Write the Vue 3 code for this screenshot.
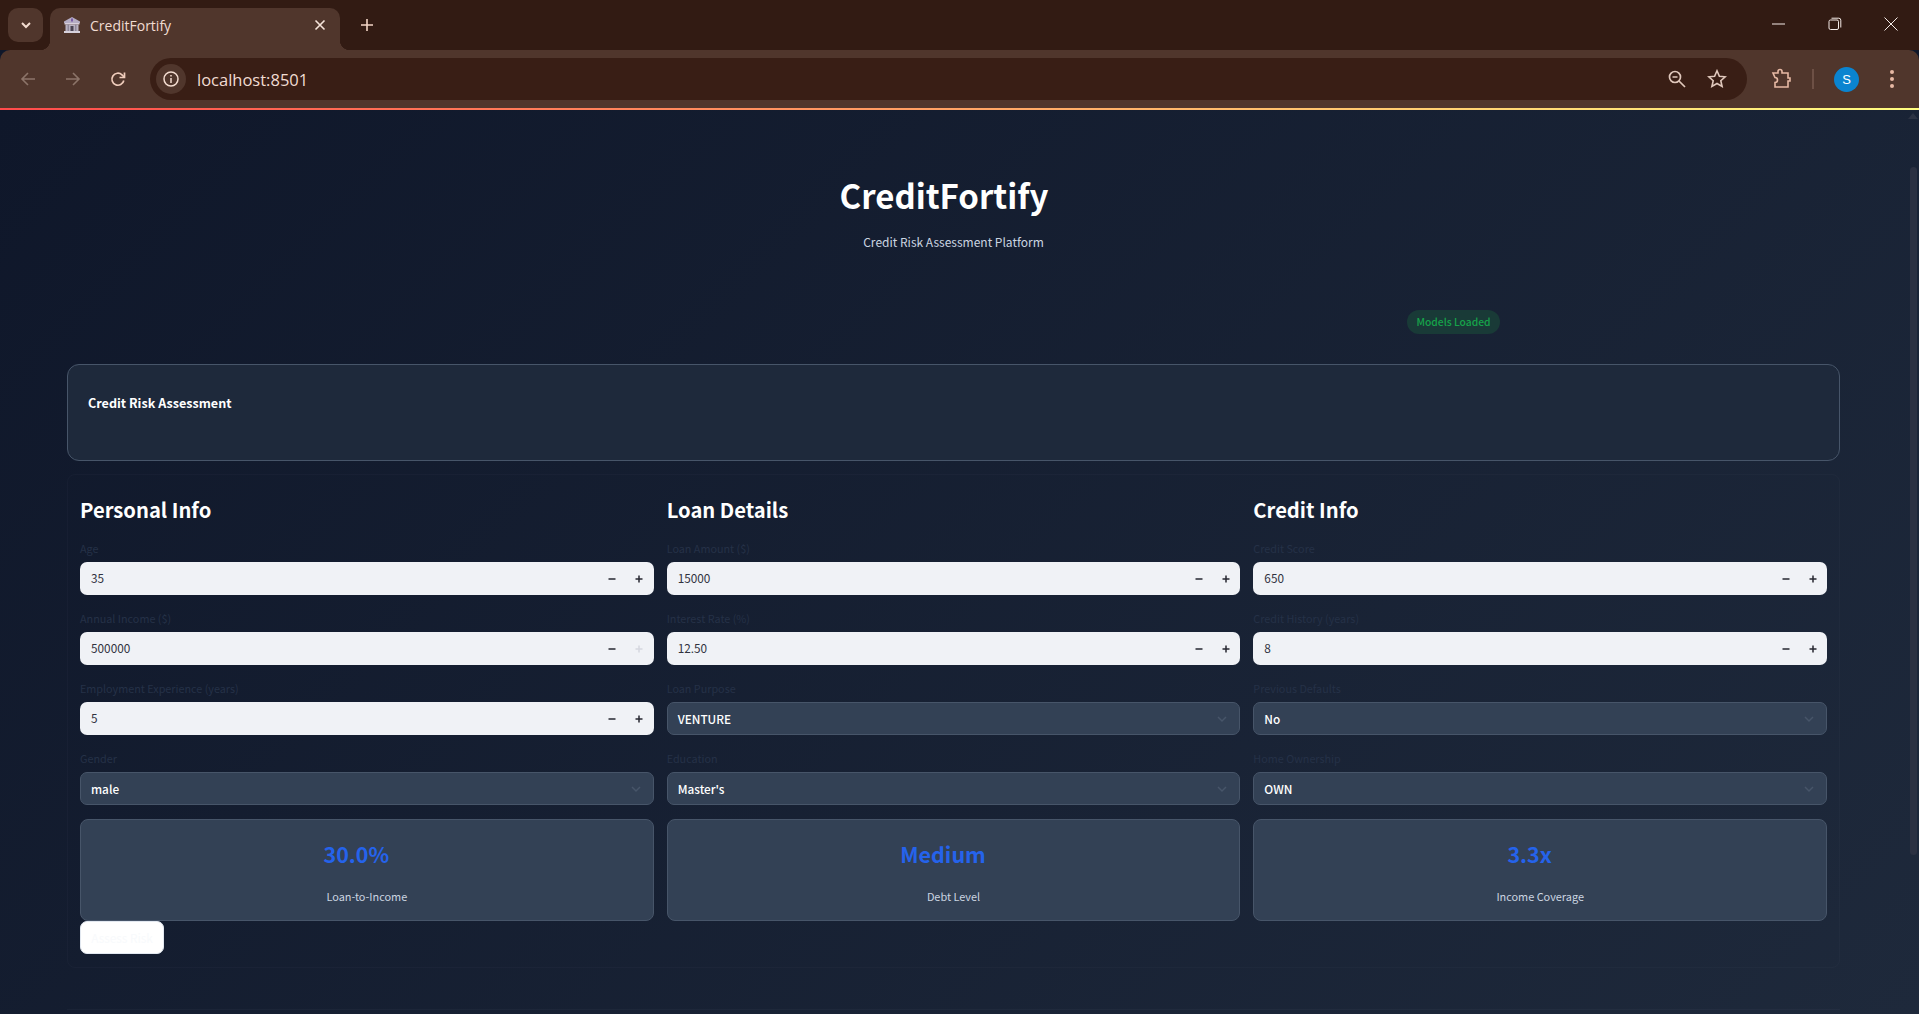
<script setup>
const columns = [
  {
    title: 'Personal Info',
    fields: [
      { label: 'Age', value: '35', type: 'number' },
      { label: 'Annual Income ($)', value: '500000', type: 'number', maxed: true },
      { label: 'Employment Experience (years)', value: '5', type: 'number' },
      { label: 'Gender', value: 'male', type: 'select' }
    ],
    metric: { value: '30.0%', label: 'Loan-to-Income' }
  },
  {
    title: 'Loan Details',
    fields: [
      { label: 'Loan Amount ($)', value: '15000', type: 'number' },
      { label: 'Interest Rate (%)', value: '12.50', type: 'number' },
      { label: 'Loan Purpose', value: 'VENTURE', type: 'select' },
      { label: 'Education', value: "Master's", type: 'select' }
    ],
    metric: { value: 'Medium', label: 'Debt Level' }
  },
  {
    title: 'Credit Info',
    fields: [
      { label: 'Credit Score', value: '650', type: 'number' },
      { label: 'Credit History (years)', value: '8', type: 'number' },
      { label: 'Previous Defaults', value: 'No', type: 'select' },
      { label: 'Home Ownership', value: 'OWN', type: 'select' }
    ],
    metric: { value: '3.3x', label: 'Income Coverage' }
  }
]
</script>

<template>
  <div class="window">
    <div class="tabstrip">
      <div class="tabsearch">
        <svg width="14" height="14" viewBox="0 0 14 14"><path d="M3 5l4 4 4-4" fill="none" stroke="#f3dcd0" stroke-width="2"/></svg>
      </div>
      <div class="tab">
        <svg class="favicon" width="18" height="18" viewBox="0 0 18 18">
          <path d="M9 1L1 5.500V7h16V5.500z" fill="#b5adc4"/>
          <rect x="8" y="2.500" width="2" height="3" fill="#7a5ca8"/>
          <rect x="1.500" y="7" width="15" height="1.500" fill="#d8d0dc"/>
          <rect x="2.500" y="8.500" width="13" height="6.500" fill="#b9b2c2"/>
          <rect x="4.500" y="8.500" width="1.500" height="6.500" fill="#8f8799"/>
          <rect x="12" y="8.500" width="1.500" height="6.500" fill="#8f8799"/>
          <rect x="7.500" y="10" width="3" height="5" fill="#4a4453"/>
          <rect x="1" y="15" width="16" height="2" fill="#d8d2dc"/>
        </svg>
        <span class="tabtitle">CreditFortify</span>
        <svg class="tabclose" width="12" height="12" viewBox="0 0 12 12"><path d="M1.500 1.500l9 9M10.500 1.500l-9 9" stroke="#f6e4da" stroke-width="1.600"/></svg>
      </div>
      <svg class="newtab" width="14" height="14" viewBox="0 0 14 14"><path d="M7 1v12M1 7h12" stroke="#f3d5c6" stroke-width="1.600"/></svg>
      <div class="wincontrols">
        <svg width="14" height="14" viewBox="0 0 14 14"><path d="M0 7h13" stroke="#f5ece8" stroke-width="1"/></svg>
        <svg width="14" height="14" viewBox="0 0 14 14" fill="none" stroke="#f5ece8"><rect x="1" y="3" width="9.500" height="9.500" rx="1.500"/><path d="M3.500 1.200h7.300a2 2 0 0 1 2 2v7.300"/></svg>
        <svg width="14" height="14" viewBox="0 0 14 14"><path d="M.5.500l13 13M13.500.500l-13 13" stroke="#f5ece8" stroke-width="1"/></svg>
      </div>
    </div>

    <div class="toolbar">
      <svg class="navicon" width="18" height="18" viewBox="0 0 18 18" fill="none" stroke="#8c7469" stroke-width="1.600"><path d="M16 9H3M9 3L3 9l6 6"/></svg>
      <svg class="navicon" width="18" height="18" viewBox="0 0 18 18" fill="none" stroke="#8c7469" stroke-width="1.600"><path d="M2 9h13M9 3l6 6-6 6"/></svg>
      <svg class="navicon" width="18" height="18" viewBox="0 0 18 18" fill="none" stroke="#f0cdbc" stroke-width="1.700"><path d="M14.800 10.500A6 6 0 1 1 13 4.800L15 6.800"/><path d="M15.500 2.500v5h-5" /></svg>
      <div class="omnibox">
        <div class="siteinfo">
          <svg width="18" height="18" viewBox="0 0 18 18" fill="none" stroke="#f3dcd0" stroke-width="1.500"><circle cx="9" cy="9" r="7"/><path d="M9 8v5M9 5v1.600"/></svg>
        </div>
        <span class="url">localhost:8501</span>
        <svg class="zoomicon" width="20" height="20" viewBox="0 0 20 20" fill="none" stroke="#e0c8bc" stroke-width="1.700"><circle cx="8" cy="8" r="5.500"/><path d="M12 12l6 6M5.500 8h5"/></svg>
        <svg class="star" width="20" height="20" viewBox="0 0 20 20" fill="none" stroke="#e0c8bc" stroke-width="1.600"><path d="M10 1.800l2.400 5.400 5.800.6-4.400 3.900 1.300 5.800-5.100-3-5.100 3 1.300-5.800L1.800 7.800l5.800-.6z"/></svg>
      </div>
      <svg class="puzzle" width="22" height="22" viewBox="0 0 22 22" fill="none" stroke="#e7b9a4" stroke-width="1.600"><path d="M3 5h5V3.500a2 2 0 0 1 4 0V5h6v5h2v3h-2v6H5v-4.500a2.500 2.500 0 0 0 0-5z"/></svg>
      <div class="divider"></div>
      <div class="avatar">S</div>
      <svg class="menu" width="6" height="20" viewBox="0 0 6 20" fill="#e7b9a4"><circle cx="3" cy="3" r="2"/><circle cx="3" cy="10" r="2"/><circle cx="3" cy="17" r="2"/></svg>
    </div>
    <div class="loadbar"></div>

    <div class="page">
      <div class="content">
        <div class="header">
          <h1>CreditFortify</h1>
          <p>Credit Risk Assessment Platform</p>
        </div>
        <div class="statusrow">
          <span class="badge">Models Loaded</span>
        </div>
        <div class="intro">
          <h3>Credit Risk Assessment</h3>
        </div>
        <form class="panel" @submit.prevent>
          <div class="grid">
            <div v-for="col in columns" :key="col.title" class="col">
              <h2>{{ col.title }}</h2>
              <div v-for="f in col.fields" :key="f.label" class="field">
                <label>{{ f.label }}</label>
                <div v-if="f.type === 'number'" class="numinput">
                  <span class="val">{{ f.value }}</span>
                  <span class="step">
                    <svg width="10" height="10" viewBox="0 0 10 10"><path d="M1.500 5h7" stroke="#262730" stroke-width="1.500"/></svg>
                  </span>
                  <span class="step" :class="{ off: f.maxed }">
                    <svg width="10" height="10" viewBox="0 0 10 10"><path d="M1.500 5h7M5 1.500v7" stroke="currentColor" stroke-width="1.500"/></svg>
                  </span>
                </div>
                <div v-else class="selectbox">
                  <span>{{ f.value }}</span>
                  <svg width="16" height="16" viewBox="0 0 16 16"><path d="M4 6l4 4 4-4" fill="none" stroke="#475569" stroke-width="1.500"/></svg>
                </div>
              </div>
              <div class="metric">
                <div class="metricvalue">{{ col.metric.value }}</div>
                <div class="metriclabel">{{ col.metric.label }}</div>
              </div>
            </div>
          </div>
          <button class="submit" type="submit">Assess Risk</button>
        </form>
        <div class="footerline"></div>
      </div>
      <div class="scrollbar">
        <span class="arrow"></span>
        <span class="thumb"></span>
      </div>
    </div>
  </div>
</template>

<style scoped>
.window {
  width: 1919px;
  height: 1014px;
  display: flex;
  flex-direction: column;
  overflow: hidden;
  font-family: "Noto Sans CJK SC", "Noto Sans", sans-serif;
}

.tabstrip {
  height: 50px;
  flex: none;
  display: flex;
  align-items: flex-start;
  background: #321b13;
  padding: 8px 0 0 8px;
  box-sizing: border-box;
}

.tabsearch {
  width: 35px;
  height: 34px;
  border-radius: 10px;
  background: #50362c;
  display: flex;
  align-items: center;
  justify-content: center;
}

.tab {
  position: relative;
  width: 290px;
  height: 42px;
  margin-left: 7px;
  padding: 0 14px 8px 13px;
  box-sizing: border-box;
  border-radius: 10px 10px 0 0;
  background: #50362c;
  display: flex;
  align-items: center;
}

.tab::before,
.tab::after {
  content: "";
  position: absolute;
  bottom: 0;
  width: 10px;
  height: 10px;
}

.tab::before {
  left: -10px;
  background: radial-gradient(circle at 0 0, transparent 10px, #50362c 10.5px);
}

.tab::after {
  right: -10px;
  background: radial-gradient(circle at 100% 0, transparent 10px, #50362c 10.5px);
}

.favicon {
  flex: none;
}

.tabtitle {
  flex: 1;
  margin-left: 9px;
  font-family: "Open Sans", sans-serif;
  font-size: 14px;
  color: #f1dcd2;
}

.newtab {
  margin: 10px 0 0 20px;
}

.wincontrols {
  margin-left: auto;
  display: flex;
  gap: 42px;
  padding: 9px 21px 0 0;
}

.toolbar {
  height: 58px;
  flex: none;
  display: flex;
  align-items: center;
  background: #50362c;
  border-radius: 10px 10px 0 0;
  box-sizing: border-box;
}

.navicon {
  margin-left: 19px;
  margin-right: 8px;
  flex: none;
}

.omnibox {
  width: 1597px;
  height: 42px;
  margin-left: 15px;
  border-radius: 21px;
  background: #391e15;
  display: flex;
  align-items: center;
  padding: 0 20px 0 6px;
  box-sizing: border-box;
}

.siteinfo {
  width: 30px;
  height: 30px;
  border-radius: 50%;
  background: #50362c;
  display: flex;
  align-items: center;
  justify-content: center;
}

.url {
  margin-left: 11px;
  font-family: "Open Sans", sans-serif;
  font-size: 16.500px;
  color: #f1dcd2;
}

.zoomicon {
  margin-left: auto;
}

.star {
  margin-left: 20px;
}

.puzzle {
  margin-left: 23px;
}

.divider {
  width: 2px;
  height: 20px;
  margin-left: 20px;
  background: #6d5045;
}

.avatar {
  width: 25px;
  height: 25px;
  margin-left: 20px;
  border-radius: 50%;
  background: #0a84d0;
  color: #fff;
  font-family: "Liberation Sans", sans-serif;
  font-size: 13px;
  display: flex;
  align-items: center;
  justify-content: center;
}

.menu {
  margin-left: 30px;
}

.loadbar {
  height: 2px;
  flex: none;
  background: linear-gradient(90deg, #ff4b4b, #fffd80);
}

.page {
  flex: 1;
  position: relative;
  background: linear-gradient(135deg, #0f172a 0%, #1e293b 100%);
  overflow: hidden;
}

.content {
  padding: 0 66px 0 67px;
  width: 1906px;
  box-sizing: border-box;
}

.header {
  padding-top: 64px;
  text-align: center;
}

h1 {
  margin: 0;
  padding-right: 19px;
  font-size: 33px;
  font-weight: 700;
  line-height: 43px;
  color: #fff;
}

p {
  margin: 15px 0 0;
  font-size: 12px;
  line-height: 20px;
  color: #cbd5e1;
}

.statusrow {
  margin-top: 58px;
  display: flex;
  justify-content: flex-end;
  padding-right: 340px;
}

.badge {
  width: 93px;
  height: 24px;
  border-radius: 12px;
  background: #193a37;
  color: #16a34a;
  font-size: 10.300px;
  font-weight: 500;
  line-height: 24px;
  text-align: center;
}

.intro {
  margin-top: 30px;
  height: 97px;
  box-sizing: border-box;
  padding: 26px 20px;
  background: #1e293b;
  border: 1px solid #475569;
  border-radius: 12px;
}

h3 {
  margin: 0;
  font-size: 12.600px;
  font-weight: 700;
  line-height: 24px;
  color: #fff;
}

.panel {
  margin-top: 13px;
  height: 494px;
  box-sizing: border-box;
  padding: 13px 12px 0;
  border: 1px solid rgba(148, 163, 184, 0.04);
  border-radius: 8px;
}

.grid {
  display: grid;
  grid-template-columns: repeat(3, 1fr);
  gap: 13px;
}

h2 {
  margin: 0 0 7px;
  font-size: 20.200px;
  font-weight: 600;
  line-height: 44px;
  color: #fff;
}

.field {
  margin-bottom: 14px;
}

label {
  display: block;
  height: 23px;
  font-size: 10.800px;
  line-height: 19px;
  color: #253147;
}

.numinput,
.selectbox {
  height: 33px;
  box-sizing: border-box;
  border-radius: 7px;
  display: flex;
  align-items: center;
  font-size: 11.800px;
}

.numinput {
  background: #f0f2f6;
  color: #31333f;
  padding: 0 1px 0 11px;
}

.val {
  flex: 1;
  margin-top: -2px;
}

.step {
  width: 27px;
  height: 33px;
  display: flex;
  align-items: center;
  justify-content: center;
  color: #262730;
}

.step.off {
  color: #d5d7e0;
}

.selectbox {
  background: #334155;
  border: 1px solid #475569;
  color: #fff;
  font-weight: 500;
  padding: 0 9px 0 10px;
  justify-content: space-between;
}

.metric {
  height: 102px;
  box-sizing: border-box;
  margin-top: 1px;
  background: #334155;
  border: 1px solid #475569;
  border-radius: 8px;
  text-align: center;
  padding-top: 16px;
}

.metricvalue {
  padding-right: 21px;
  font-size: 21.500px;
  font-weight: 700;
  line-height: 36px;
  color: #2563eb;
}

.metriclabel {
  margin-top: 15px;
  font-size: 10.900px;
  line-height: 18px;
  color: #cbd5e1;
}

.submit {
  display: block;
  width: 84px;
  height: 33px;
  padding: 0;
  border: 1px solid #e2e8f0;
  border-radius: 7px;
  background: #fff;
  color: #f8fafc;
  font-family: inherit;
  font-size: 11.800px;
}

.footerline {
  margin-top: 41px;
  height: 1px;
  background: rgba(148, 163, 184, 0.05);
}

.arrow {
  position: absolute;
  top: 3px;
  right: 1px;
  border: 5px solid transparent;
  border-top: 0;
  border-bottom: 6px solid #2c3343;
}

.thumb {
  position: absolute;
  top: 57px;
  right: 2px;
  width: 7px;
  height: 688px;
  border-radius: 4px;
  background: #2b3142;
}
</style>

<style>
html, body {
  background: #0f172a;
  overflow: hidden;
}
</style>
